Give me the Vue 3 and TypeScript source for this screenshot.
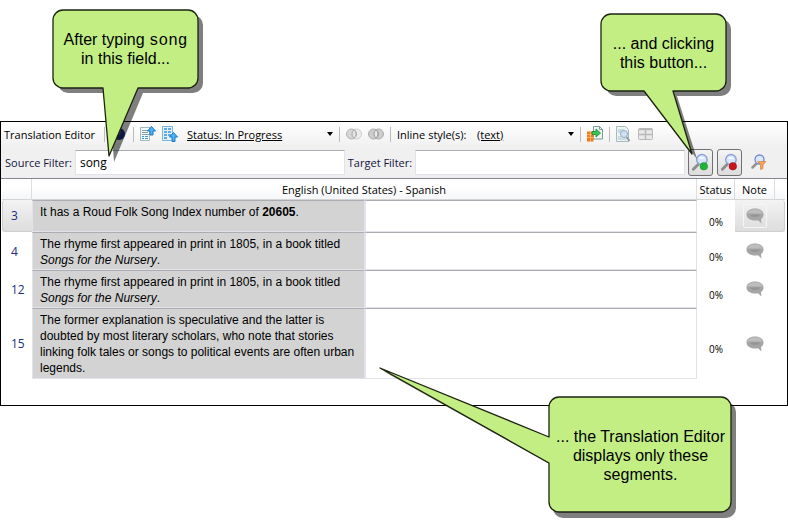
<script setup lang="ts">
import { ref } from 'vue'

interface Run {
  text: string
  kind?: 'bold' | 'italic'
}

interface Segment {
  id: number
  source: Run[]
  target: string
  status: string
}

const sourceFilter = ref('song')
const targetFilter = ref('')
const status = ref('Status: In Progress')
const inlineStyle = ref('(text)')
const selectedId = ref(3)

const segments = ref<Segment[]>([
  {
    id: 3,
    source: [
      { text: 'It has a Roud Folk Song Index number of ' },
      { text: '20605', kind: 'bold' },
      { text: '.' },
    ],
    target: '',
    status: '0%',
  },
  {
    id: 4,
    source: [
      { text: 'The rhyme first appeared in print in 1805, in a book titled ' },
      { text: 'Songs for the Nursery', kind: 'italic' },
      { text: '.' },
    ],
    target: '',
    status: '0%',
  },
  {
    id: 12,
    source: [
      { text: 'The rhyme first appeared in print in 1805, in a book titled ' },
      { text: 'Songs for the Nursery', kind: 'italic' },
      { text: '.' },
    ],
    target: '',
    status: '0%',
  },
  {
    id: 15,
    source: [
      {
        text: 'The former explanation is speculative and the latter is doubted by most literary scholars, who note that stories linking folk tales or songs to political events are often urban legends.',
      },
    ],
    target: '',
    status: '0%',
  },
])
</script>

<template>
  <main class="page">
    <section class="editor" aria-label="Translation Editor">
      <div class="toolbar">
        <span class="title">Translation Editor</span>
        <span class="sep"></span>
        <button class="tool" type="button" aria-label="Help">
          <svg viewBox="0 0 16 16"><circle cx="8" cy="8" r="6" fill="#1e2f86" /><circle cx="7" cy="6" r="3" fill="#3c56b8" /></svg>
        </button>
        <span class="sep"></span>
        <button class="tool" type="button" aria-label="Previous segment">
          <svg viewBox="0 0 16 16">
            <path d="M0.500 1.500h9v13h-9z" fill="#f6fafa" stroke="#a3b9bb" />
            <path d="M2 4.500h6M2 6.500h6M2 8.500h7" stroke="#8aa0a5" />
            <path d="M2 10.500h2M5 10.500h3M2 12.500h2M5 12.500h3" stroke="#3f93dd" />
            <path d="M11.500 0.500l4 4.500h-2.500v4h-3v-4h-2.500z" fill="#4cb2f2" stroke="#1c78c4" />
          </svg>
        </button>
        <button class="tool" type="button" aria-label="Next segment">
          <svg viewBox="0 0 16 16">
            <path d="M0.500 0.500h10v14h-10z" fill="#e5f2fb" stroke="#7cb4dd" />
            <path d="M2 3h3M6 3h3M2 6h3M6 6h3M2 9h3M6 9h3M2 12h3" stroke="#5fa8e4" stroke-width="2" />
            <path d="M11.500 6.500l4 4.500h-2.500v4.500h-3v-4.500h-2.500z" fill="#4cb2f2" stroke="#1c78c4" />
          </svg>
        </button>
        <span class="drop drop-status">
          <select v-model="status" aria-label="Status">
            <option>Status: In Progress</option>
          </select>
          <svg class="caret" viewBox="0 0 6 4"><path d="M0 0h6L3 4z" /></svg>
        </span>
        <span class="sep"></span>
        <button class="tool" type="button" aria-label="Split segment" disabled>
          <svg viewBox="0 0 16 16">
            <circle cx="10.500" cy="8" r="5" fill="#ececec" stroke="#cccccc" />
            <circle cx="5.500" cy="8" r="5" fill="#c9c9c9" fill-opacity="0.700" stroke="#b0b0b0" />
            <path d="M8 4a5 5 0 0 1 0 8a5 5 0 0 1 0-8z" fill="#e6e6e6" stroke="#b0b0b0" />
          </svg>
        </button>
        <button class="tool" type="button" aria-label="Merge segments" disabled>
          <svg viewBox="0 0 16 16">
            <circle cx="10.500" cy="8" r="5" fill="#cdcdcd" stroke="#aaaaaa" />
            <circle cx="5.500" cy="8" r="5" fill="#cdcdcd" stroke="#aaaaaa" />
            <path d="M8 4a5 5 0 0 1 0 8a5 5 0 0 1 0-8z" fill="#ededed" stroke="#999999" />
          </svg>
        </button>
        <span class="sep"></span>
        <label class="style-label" for="inline-style">Inline style(s):</label>
        <span class="drop drop-style">
          <select id="inline-style" v-model="inlineStyle">
            <option>(text)</option>
          </select>
          <svg class="caret" viewBox="0 0 6 4"><path d="M0 0h6L3 4z" /></svg>
        </span>
        <span class="sep"></span>
        <button class="tool" type="button" aria-label="Insert translation">
          <svg viewBox="0 0 16 16">
            <path d="M6.500 0.500h6l3 3v9.500h-9z" fill="#edf6f4" stroke="#7c9c99" />
            <path d="M12.500 0.500v3h3" fill="none" stroke="#7c9c99" />
            <path d="M0 5.500h6.500v10h-6.500z" fill="#f07a1c" />
            <path d="M0 8.500h7M0 11.500h7M3.500 6v9" stroke="#ffc27a" stroke-width="0.800" />
            <path d="M5 5.500h4v-2.500l4.500 4-4.500 4v-2.500h-4z" fill="#3cc651" stroke="#17862c" stroke-width="0.800" />
          </svg>
        </button>
        <span class="sep"></span>
        <button class="tool" type="button" aria-label="Preview">
          <svg viewBox="0 0 16 16">
            <path d="M0.500 0.500h9l3 3v12h-12z" fill="#edf3f3" stroke="#a4bcbc" />
            <path d="M2 4h6M2 6h3M2 11h3M2 13h8" stroke="#a9c4c4" />
            <path d="M10.500 11l3 4" stroke="#8f98a5" stroke-width="2" />
            <circle cx="8" cy="8" r="3.500" fill="#cfe2f4" stroke="#93a9c6" />
          </svg>
        </button>
        <button class="tool" type="button" aria-label="Table view" disabled>
          <svg viewBox="0 0 16 16">
            <rect x="0.500" y="2.500" width="14" height="11" rx="1" fill="#e9e9e9" stroke="#b8b8b8" />
            <path d="M1 3.500h13M1 8.500h13M7.500 4v9" stroke="#b8b8b8" stroke-width="1.500" />
          </svg>
        </button>
      </div>

      <form class="filters" @submit.prevent>
        <label class="filter-label" for="source-filter">Source Filter:</label>
        <input id="source-filter" v-model="sourceFilter" type="text" />
        <label class="filter-label" for="target-filter">Target Filter:</label>
        <input id="target-filter" v-model="targetFilter" type="text" />
        <button class="search boxed" type="submit" aria-label="Apply filter">
          <svg viewBox="0 0 20 20">
            <path d="M8 11.500L2.500 17" stroke="#8c8c8c" stroke-width="3" stroke-linecap="round" />
            <circle cx="11.500" cy="7" r="5.500" fill="#d6e6fb" stroke="#8ba2d8" stroke-width="1.500" />
            <path d="M8 6a4 4 0 0 1 7 0z" fill="#f5faff" />
            <circle cx="13.500" cy="14" r="4" fill="#21b336" stroke="#128323" stroke-width="0.500" />
          </svg>
        </button>
        <button class="search boxed" type="button" aria-label="Clear filter">
          <svg viewBox="0 0 20 20">
            <path d="M8 11.500L2.500 17" stroke="#8c8c8c" stroke-width="3" stroke-linecap="round" />
            <circle cx="11.500" cy="7" r="5.500" fill="#d6e6fb" stroke="#8ba2d8" stroke-width="1.500" />
            <path d="M8 6a4 4 0 0 1 7 0z" fill="#f5faff" />
            <circle cx="13.500" cy="14" r="4" fill="#c8141c" stroke="#8e0b10" stroke-width="0.500" />
          </svg>
        </button>
        <button class="search plain" type="button" aria-label="Advanced filter">
          <svg viewBox="0 0 16 16">
            <path d="M5 10L1.500 13.500" stroke="#959595" stroke-width="2.500" stroke-linecap="round" />
            <circle cx="8.500" cy="5.500" r="4.500" fill="#d9e8fb" stroke="#7189cf" stroke-width="1.300" />
            <path d="M6.500 7.500h8.500l-3 3.500v3.500l-2.500 1v-4.500z" fill="#f3a35a" stroke="#cf7a33" stroke-width="0.600" />
          </svg>
        </button>
      </form>

      <div class="grid">
        <table>
          <colgroup>
            <col class="col-number" />
            <col />
            <col />
            <col class="col-status" />
            <col class="col-note" />
            <col class="col-end" />
          </colgroup>
          <thead>
            <tr>
              <th></th>
              <th colspan="2">English (United States) - Spanish</th>
              <th>Status</th>
              <th>Note</th>
              <th></th>
            </tr>
          </thead>
          <tbody>
            <tr
              v-for="segment in segments"
              :key="segment.id"
              :class="{ selected: segment.id === selectedId }"
              @click="selectedId = segment.id"
            >
              <td class="number">{{ segment.id }}</td>
              <td class="source"><span v-for="(run, index) in segment.source" :key="index" :class="run.kind">{{ run.text }}</span></td>
              <td class="target">
                <textarea v-model="segment.target" rows="1" :aria-label="`Translation of segment ${segment.id}`"></textarea>
              </td>
              <td class="status">{{ segment.status }}</td>
              <td class="note">
                <button type="button" :aria-label="`Note for segment ${segment.id}`">
                  <svg viewBox="0 0 18 16">
                    <path d="M9 0.500c5 0 8.500 2.500 8.500 6 0 2-1 3.500-2.500 4.500l0.500 4.500-3.500-3.300c-1 0.300-2 0.300-3 0.300-5 0-8.500-2.500-8.500-6s3.500-6 8.500-6z" fill="#a5a5a5" />
                    <path d="M9 1.200c4 0 7 1.800 7.800 4.300h-15.600c0.800-2.500 3.800-4.300 7.800-4.300z" fill="#bdbdbd" />
                    <path d="M4 6.500h10c0 1.500-2 2.500-5 2.500s-5-1-5-2.500z" fill="#959595" />
                  </svg>
                </button>
              </td>
              <td class="end"></td>
            </tr>
          </tbody>
        </table>
      </div>
    </section>

    <aside class="callout callout-field">
      <svg class="bubble" width="156" height="158" viewBox="0 0 156 158">
        <path class="shadow" d="M16 6H141a10 10 0 0 1 10 10V74a10 10 0 0 1-10 10H91L62 153 57 84H16a10 10 0 0 1-10-10V16a10 10 0 0 1 10-10z" />
        <path class="face" d="M11 1H136a10 10 0 0 1 10 10V69a10 10 0 0 1-10 10H86L57 147 51 79H11a10 10 0 0 1-10-10V11a10 10 0 0 1 10-10z" />
      </svg>
      <p>After typing <code>song</code><br />in this field...</p>
    </aside>

    <aside class="callout callout-button">
      <svg class="bubble" width="132" height="150" viewBox="0 0 132 150">
        <path class="shadow" d="M16 6H121a10 10 0 0 1 10 10V73a10 10 0 0 1-10 10H77L97 146 48 83H16a10 10 0 0 1-10-10V16a10 10 0 0 1 10-10z" />
        <path class="face" d="M11 1H116a10 10 0 0 1 10 10V68a10 10 0 0 1-10 10H73L92 141 44 78H11a10 10 0 0 1-10-10V11a10 10 0 0 1 10-10z" />
      </svg>
      <p>... and clicking<br />this button...</p>
    </aside>

    <aside class="callout callout-result">
      <svg class="bubble" width="358" height="152" viewBox="0 0 358 152">
        <path class="shadow" d="M184 35H347a10 10 0 0 1 10 10V141a10 10 0 0 1-10 10H184a10 10 0 0 1-10-10V99L4 4 174 74V45a10 10 0 0 1 10-10z" />
        <path class="face" d="M180 30H342a10 10 0 0 1 10 10V135a10 10 0 0 1-10 10H180a10 10 0 0 1-10-10V96L1 1 170 70V40a10 10 0 0 1 10-10z" />
      </svg>
      <p>... the Translation Editor<br />displays only these<br />segments.</p>
    </aside>
  </main>
</template>

<style>
body {
  background: #ffffff;
}
</style>

<style scoped>
.page {
  position: relative;
  box-sizing: border-box;
  min-height: 100vh;
  padding: 121px 0;
  font-family: 'Open Sans', 'Noto Sans', sans-serif;
  font-size: 11px;
  color: #000000;
}

.page * {
  box-sizing: border-box;
}

.editor {
  border: 1px solid #000000;
  background: #ffffff;
}

.toolbar {
  display: flex;
  align-items: center;
  gap: 6px;
  height: 24px;
  padding-left: 3px;
  background: linear-gradient(#ffffff, #f1f1f1);
  white-space: nowrap;
}

.title {
  flex: none;
  width: 94px;
}

.style-label {
  flex: none;
  width: 71px;
}

.sep {
  flex: none;
  width: 1px;
  height: 15px;
  background: #bcbcbc;
}

.tool {
  flex: none;
  width: 16px;
  height: 16px;
  padding: 0;
  border: 0;
  background: none;
}

.tool svg,
.search svg,
.note svg {
  display: block;
  width: 100%;
  height: 100%;
}

.drop {
  display: flex;
  flex: none;
  align-items: center;
}

.drop-status {
  width: 149px;
}

.drop-style {
  width: 100px;
}

.drop select {
  flex: 1;
  min-width: 0;
  padding: 0 3px;
  border: 0;
  background: none;
  appearance: none;
  color: #000000;
  font-family: inherit;
  font-size: 11px;
  text-decoration: underline;
}

.caret {
  width: 6px;
  height: 4px;
}

.filters {
  display: flex;
  align-items: center;
  gap: 3px;
  height: 32px;
  padding: 0 20px 0 4px;
  background: #f0f0f0;
  white-space: nowrap;
}

.filter-label {
  flex: none;
  color: #14143c;
}

.filters input {
  flex: 1;
  min-width: 0;
  height: 25px;
  padding: 0 4px;
  border: 1px solid #e2e3ea;
  border-top-color: #abadb3;
  background: #ffffff;
  font-family: inherit;
  font-size: 12px;
  color: #000000;
}

.search {
  flex: none;
  padding: 0;
  border: 0;
  background: none;
}

.boxed {
  width: 25px;
  height: 27px;
  padding: 2px;
  border: 1px solid #707070;
  border-radius: 3px;
  background: linear-gradient(#f4f4f4, #dcdcdc);
}

.boxed + .search {
  margin-left: 1px;
}

.plain {
  width: 16px;
  height: 16px;
}

.boxed + .plain {
  margin-left: 6px;
}

.grid {
  padding: 0 2px 26px 1px;
  border-top: 1px solid #828790;
}

table {
  width: 100%;
  table-layout: fixed;
  border-collapse: separate;
  border-spacing: 0;
}

.col-number {
  width: 30px;
}

.col-status {
  width: 38px;
}

.col-note {
  width: 40px;
}

.col-end {
  width: 10px;
}

th {
  height: 21px;
  padding: 0;
  border-right: 1px solid #dcdde0;
  border-bottom: 1px solid #d5d5d5;
  background: linear-gradient(#ffffff 40%, #f5f6f8);
  font-weight: 400;
  white-space: nowrap;
}

th:last-child {
  border-right: 0;
}

td {
  height: 32px;
  padding: 0;
  vertical-align: middle;
}

.number {
  padding-left: 8px;
  border-left: 1px solid transparent;
  color: #1a2f7c;
  font-size: 12px;
}

.source,
.target {
  border: 1px solid #e2e3ea;
  border-top-color: #abadb3;
  vertical-align: top;
}

.source {
  padding: 3px 6px 1px 7px;
  background: #d3d3d3;
  font-family: 'Liberation Sans', Arial, sans-serif;
  font-size: 12px;
  line-height: 16px;
}

tr:last-child .source {
  padding-bottom: 2px;
}

.bold {
  font-weight: 700;
}

.italic {
  font-style: italic;
}

.target textarea {
  display: block;
  width: 100%;
  padding: 3px 6px;
  border: 0;
  background: none;
  font-family: 'Liberation Sans', Arial, sans-serif;
  font-size: 12px;
  line-height: 16px;
  resize: none;
}

.status {
  padding-top: 11px;
  font-size: 10px;
  text-align: center;
}

.note button {
  display: block;
  width: 24px;
  height: 24px;
  margin: 0 auto;
  padding: 3px 2px;
  border: 1px solid transparent;
  border-radius: 2px;
  background: none;
}

.selected .number,
.selected .note,
.selected .end {
  border: 0 solid #cfcfcf;
  border-bottom-width: 1px;
  background: linear-gradient(#f3f3f3, #dddddd);
}

.selected .number {
  border-left-width: 1px;
  border-radius: 3px 0 0 3px;
}

.selected .end {
  border-right-width: 1px;
  border-radius: 0 3px 3px 0;
}

.selected .note button {
  border-color: #f6f6f6;
}

.callout {
  position: absolute;
  display: flex;
  align-items: center;
  justify-content: center;
  font-family: 'Liberation Sans', Arial, sans-serif;
  font-size: 16px;
  line-height: 19px;
  text-align: center;
  white-space: nowrap;
}

.callout p {
  position: relative;
  margin: 0;
}

.callout code {
  font-family: 'Liberation Mono', 'Courier New', monospace;
  font-size: 16px;
  line-height: 1;
}

.bubble {
  position: absolute;
  overflow: visible;
}

.shadow {
  fill: #000000;
  fill-opacity: 0.5;
}

.face {
  fill: #c2ee84;
  stroke: #1c2410;
  stroke-width: 1.3;
  stroke-linejoin: round;
}

.callout-field {
  top: 9px;
  left: 52px;
  width: 147px;
  height: 80px;
}

.callout-button {
  top: 13px;
  left: 600px;
  width: 127px;
  height: 80px;
}

.callout-result {
  top: 397px;
  left: 549px;
  width: 183px;
  height: 116px;
}

.callout-field .bubble,
.callout-button .bubble {
  top: 0;
  left: 0;
}

.callout-result .bubble {
  top: -30px;
  left: -170px;
}
</style>
